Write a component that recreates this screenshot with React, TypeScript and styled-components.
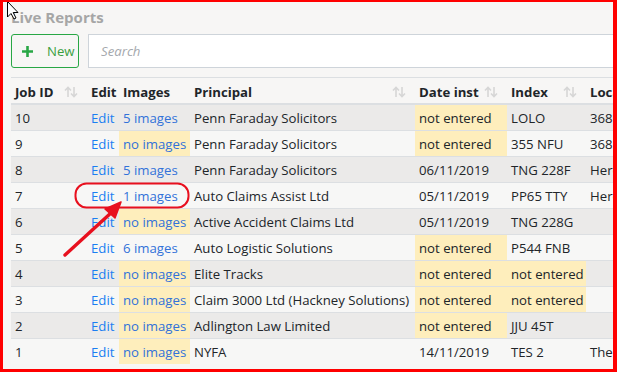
import React from 'react'
import styled, { createGlobalStyle } from 'styled-components'

const GlobalStyle = createGlobalStyle`
  html, body {
    margin: 0;
    padding: 0;
    background: #f7f6f5;
  }
  body {
    font-family: "Open Sans", "Liberation Sans", sans-serif;
  }
`

type Row = {
  id: number
  images: string
  principal: string
  date: string
  index: string
  loc: string
}

const rows: Row[] = [
  { id: 10, images: '5 images', principal: 'Penn Faraday Solicitors', date: 'not entered', index: 'LOLO', loc: '368' },
  { id: 9, images: 'no images', principal: 'Penn Faraday Solicitors', date: 'not entered', index: '355 NFU', loc: '368' },
  { id: 8, images: '5 images', principal: 'Penn Faraday Solicitors', date: '06/11/2019', index: 'TNG 228F', loc: 'Hero' },
  { id: 7, images: '1 images', principal: 'Auto Claims Assist Ltd', date: '05/11/2019', index: 'PP65 TTY', loc: 'Hero' },
  { id: 6, images: 'no images', principal: 'Active Accident Claims Ltd', date: '05/11/2019', index: 'TNG 228G', loc: '' },
  { id: 5, images: '6 images', principal: 'Auto Logistic Solutions', date: 'not entered', index: 'P544 FNB', loc: '' },
  { id: 4, images: 'no images', principal: 'Elite Tracks', date: 'not entered', index: 'not entered', loc: '' },
  { id: 3, images: 'no images', principal: 'Claim 3000 Ltd (Hackney Solutions)', date: 'not entered', index: 'not entered', loc: '' },
  { id: 2, images: 'no images', principal: 'Adlington Law Limited', date: 'not entered', index: 'JJU 45T', loc: '' },
  { id: 1, images: 'no images', principal: 'NYFA', date: '14/11/2019', index: 'TES 2', loc: 'The' },
]

const missing = (v: string) => v === 'no images' || v === 'not entered'

function SortIcon() {
  return (
    <svg width="14" height="12" viewBox="0 0 14 12">
      <g fill="none" stroke="#d6d6d6" strokeWidth="1.6">
        <path d="M4 11V1.5M1 4.5l3-3 3 3" />
        <path d="M10 1v9.5M7 7.5l3 3 3-3" />
      </g>
    </svg>
  )
}

function App() {
  return (
    <>
      <GlobalStyle />
      <Frame>
        <Page>
          <Title>Live Reports</Title>
          <Toolbar>
            <NewButton>
              <svg width="11" height="11" viewBox="0 0 11 11">
                <path d="M5.5 0v11M0 5.5h11" stroke="#28a745" strokeWidth="2.6" />
              </svg>
              New
            </NewButton>
            <Search placeholder="Search" />
          </Toolbar>
          <Table>
            <colgroup>
              <col style={{ width: 76 }} />
              <col style={{ width: 32 }} />
              <col style={{ width: 71 }} />
              <col style={{ width: 225 }} />
              <col style={{ width: 92 }} />
              <col style={{ width: 79 }} />
              <col style={{ width: 120 }} />
            </colgroup>
            <thead>
              <tr>
                <Th>
                  <HeadInner>Job ID<SortIcon /></HeadInner>
                </Th>
                <Th>Edit</Th>
                <Th>Images</Th>
                <Th>
                  <HeadInner>Principal<SortIcon /></HeadInner>
                </Th>
                <Th>
                  <HeadInner>Date inst<SortIcon /></HeadInner>
                </Th>
                <Th>
                  <HeadInner>Index<SortIcon /></HeadInner>
                </Th>
                <Th>Location</Th>
              </tr>
            </thead>
            <tbody>
              {rows.map((r, i) => (
                <Tr key={r.id} $odd={i % 2 === 0}>
                  <Td>{r.id}</Td>
                  <Td><EditLink>Edit</EditLink></Td>
                  <Td $warn={missing(r.images)}><ImagesLink>{r.images}</ImagesLink></Td>
                  <Td>{r.principal}</Td>
                  <Td $warn={missing(r.date)}>{r.date}</Td>
                  <Td $warn={missing(r.index)}>{r.index}</Td>
                  <Td>{r.loc}</Td>
                </Tr>
              ))}
            </tbody>
          </Table>
        </Page>
        <Annotations width="617" height="372" viewBox="0 0 617 372">
          <rect x="75.5" y="183.5" width="113" height="24" rx="11" fill="none" stroke="#e8101e" strokeWidth="2" />
          <path d="M65 255L112 212" stroke="#e8101e" strokeWidth="3.4" strokeLinecap="round" />
          <path d="M121 202L105 209L115 218Z" fill="#e8101e" stroke="#e8101e" strokeWidth="1.5" strokeLinejoin="round" />
          <path d="M7.5 1.5V17L11 13.5L14 19L16 18L13.2 12.5H18Z" fill="#fff" stroke="#000" strokeWidth="1" strokeLinejoin="round" />
        </Annotations>
      </Frame>
    </>
  )
}

export default App

const Frame = styled.div`
  position: relative;
  width: 617px;
  height: 372px;
  box-sizing: border-box;
  border: solid #ff0000;
  border-width: 2px 4px 3px 3px;
  overflow: hidden;
  background: #f7f6f5;
`

const Page = styled.div`
  padding: 4px 0 0 8px;
  width: 700px;
`

const Title = styled.h1`
  margin: 0;
  font-size: 15px;
  line-height: 22px;
  font-weight: 700;
  color: #a6a6a6;
`

const Toolbar = styled.div`
  display: flex;
  gap: 9px;
  margin-top: 6px;
  margin-bottom: 9px;
`

const NewButton = styled.button`
  display: flex;
  align-items: center;
  gap: 14px;
  height: 34px;
  width: 68px;
  padding: 0 0 0 10px;
  box-sizing: border-box;
  border: 1px solid #28a745;
  border-radius: 3px;
  background: transparent;
  color: #3a9f3f;
  font-family: "Open Sans", sans-serif;
  font-size: 13.2px;
`

const Search = styled.input`
  flex: 1;
  height: 34px;
  box-sizing: border-box;
  border: 1px solid #ced4da;
  background: #fff;
  padding: 0 12px;
  font-family: "Open Sans", sans-serif;
  font-size: 13.2px;
  &::placeholder {
    color: #a4a8ad;
    font-style: italic;
  }
`

const Table = styled.table`
  border-collapse: collapse;
  table-layout: fixed;
  width: 695px;
  font-size: 13.2px;
  color: #212529;
`

const Th = styled.th`
  text-align: left;
  font-weight: 700;
  height: 22px;
  padding: 3px 4px 0;
  border-top: 1px solid #dcdfe2;
  border-bottom: 2px solid #dcdfe2;
  white-space: nowrap;
`

const HeadInner = styled.div`
  display: flex;
  justify-content: space-between;
  align-items: center;
  padding-right: 5px;
`

const Tr = styled.tr<{ $odd: boolean }>`
  background: ${(p) => (p.$odd ? '#ebeae9' : '#f7f7f6')};
`

const Td = styled.td<{ $warn?: boolean }>`
  height: 25px;
  padding: 0 4px;
  border-top: 1px solid #dcdfe2;
  white-space: nowrap;
  overflow: hidden;
  background: ${(p) => (p.$warn ? '#feeebc' : 'transparent')};
`

const EditLink = styled.a`
  color: #1a7ef2;
  cursor: pointer;
`

const ImagesLink = styled.a`
  color: #3272d9;
  cursor: pointer;
`

const Annotations = styled.svg`
  position: absolute;
  left: -3px;
  top: -2px;
  pointer-events: none;
`
